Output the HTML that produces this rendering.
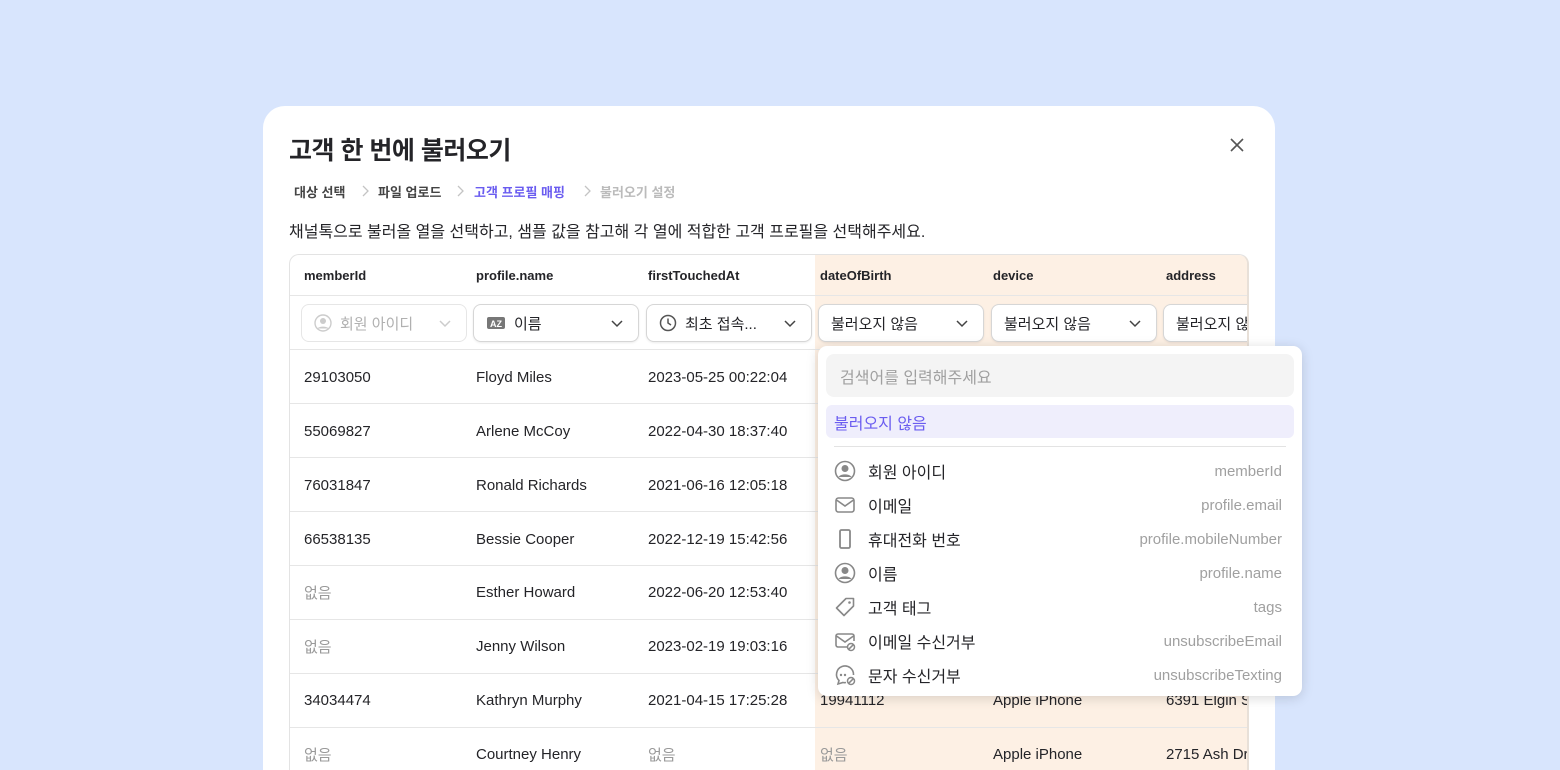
<!DOCTYPE html>
<html><head><meta charset="utf-8"><style>
*{box-sizing:border-box;margin:0;padding:0}
html,body{width:1560px;height:770px;overflow:hidden}
body{background:#d8e5fd;font-family:"Liberation Sans","Noto Sans CJK KR",sans-serif;color:#242428;position:relative}
.modal{position:absolute;left:263px;top:106px;width:1012px;height:664px;background:#fff;border-radius:22px 22px 0 0}
.abs{position:absolute;white-space:nowrap}
.title{left:289px;top:131px;font-size:25px;font-weight:700;letter-spacing:-0.5px}
.bc{top:182px;font-size:13px;font-weight:700}
.tbl{position:absolute;left:289px;top:254px;width:960px;height:516px;border:1px solid #e3e3e3;border-bottom:none;border-right:2px solid #e8e0d8;border-radius:10px 10px 0 0;overflow:hidden;background:#fff}
.orange{position:absolute;left:525px;top:0;width:440px;height:600px;background:#fdf0e4}
.hl{position:absolute;left:0;width:100%;height:1px;background:#e6e6e6}
.th{position:absolute;top:13px;font-size:13px;font-weight:700;white-space:nowrap}
.td{position:absolute;font-size:15px;white-space:nowrap}
.sel{position:absolute;top:49px;width:166px;height:38px;border:1px solid #d6d6d6;border-radius:8px;background:#fff;box-shadow:0 1px 2px rgba(0,0,0,.08);font-size:15px;padding:0 0 0 12px;display:flex;align-items:center;gap:8px;white-space:nowrap;overflow:hidden}
.sel .ch{position:absolute;right:14px;top:11px}
.dd{position:absolute;left:818px;top:346px;width:484px;height:350px;background:#fff;border-radius:9px;box-shadow:0 2px 12px rgba(0,0,0,.15)}
.it{position:absolute;left:16px;right:20px;height:30px;display:flex;align-items:center;font-size:16px}
.it svg{margin-right:12px}
.it .k{margin-left:auto;color:#a0a0a0;font-size:15px}
.gray{color:#9a9a9a}
</style></head><body>
<div class="modal"></div>
<div class="abs title">고객 한 번에 불러오기</div>
<svg class="abs" style="left:1229px;top:137px" width="16" height="16" viewBox="0 0 16 16"><path d="M2 2L14 14M14 2L2 14" stroke="#555" stroke-width="1.6"/></svg>
<div class="abs bc" style="left:294px;color:#444">대상 선택</div>
<svg class="abs" style="left:360px;top:184px" width="10" height="14" viewBox="0 0 10 14"><path d="M3 2l5 5-5 5" fill="none" stroke="#c4c4c4" stroke-width="1.3"/></svg>
<div class="abs bc" style="left:378px;color:#444">파일 업로드</div>
<svg class="abs" style="left:455px;top:184px" width="10" height="14" viewBox="0 0 10 14"><path d="M3 2l5 5-5 5" fill="none" stroke="#c4c4c4" stroke-width="1.3"/></svg>
<div class="abs bc" style="left:474px;color:#6a5cf0">고객 프로필 매핑</div>
<svg class="abs" style="left:582px;top:184px" width="10" height="14" viewBox="0 0 10 14"><path d="M3 2l5 5-5 5" fill="none" stroke="#c4c4c4" stroke-width="1.3"/></svg>
<div class="abs bc" style="left:600px;color:#bbb">불러오기 설정</div>
<div class="abs" style="left:289px;top:218px;font-size:16px">채널톡으로 불러올 열을 선택하고, 샘플 값을 참고해 각 열에 적합한 고객 프로필을 선택해주세요.</div>
<div class="tbl">
<div class="orange"></div>
<div class="hl" style="top:40px"></div><div class="hl" style="top:94px"></div>
<div class="hl" style="top:148px"></div><div class="hl" style="top:202px"></div><div class="hl" style="top:256px"></div><div class="hl" style="top:310px"></div><div class="hl" style="top:364px"></div><div class="hl" style="top:418px"></div><div class="hl" style="top:472px"></div>
<div class="th" style="left:14px">memberId</div><div class="th" style="left:186px">profile.name</div><div class="th" style="left:358px">firstTouchedAt</div><div class="th" style="left:530px">dateOfBirth</div><div class="th" style="left:703px">device</div><div class="th" style="left:876px">address</div>
<div class="sel" style="left:11px;color:#b0b0b0;border-color:#e6e6e6;box-shadow:none"><svg width="18" height="18" viewBox="0 0 18 18"><circle cx="9" cy="9" r="8" fill="none" stroke="#ccc" stroke-width="1.4"/><circle cx="9" cy="7" r="3" fill="#ccc"/><path d="M3.5 14.5c1.5-2.5 9.5-2.5 11 0" fill="#ccc"/></svg>회원 아이디<svg class="ch" width="14" height="14" viewBox="0 0 14 14"><path d="M2 5l5 5 5-5" fill="none" stroke="#ccc" stroke-width="1.5"/></svg></div>
<div class="sel" style="left:183px"><svg width="20" height="14" viewBox="0 0 20 14"><rect x="1" y="1" width="18" height="12" rx="2" fill="#777"/><text x="10" y="11" font-size="9" font-weight="700" fill="#fff" text-anchor="middle" font-family="Liberation Sans">AZ</text></svg>이름<svg class="ch" width="14" height="14" viewBox="0 0 14 14"><path d="M2 5l5 5 5-5" fill="none" stroke="#444" stroke-width="1.5"/></svg></div>
<div class="sel" style="left:356px"><svg width="18" height="18" viewBox="0 0 18 18"><circle cx="9" cy="9" r="7.5" fill="none" stroke="#555" stroke-width="1.5"/><path d="M9 4.5V9l3 2" fill="none" stroke="#555" stroke-width="1.5"/></svg>최초 접속...<svg class="ch" width="14" height="14" viewBox="0 0 14 14"><path d="M2 5l5 5 5-5" fill="none" stroke="#444" stroke-width="1.5"/></svg></div>
<div class="sel" style="left:528px">불러오지 않음<svg class="ch" width="14" height="14" viewBox="0 0 14 14"><path d="M2 5l5 5 5-5" fill="none" stroke="#444" stroke-width="1.5"/></svg></div>
<div class="sel" style="left:701px">불러오지 않음<svg class="ch" width="14" height="14" viewBox="0 0 14 14"><path d="M2 5l5 5 5-5" fill="none" stroke="#444" stroke-width="1.5"/></svg></div>
<div class="sel" style="left:873px">불러오지 않음</div>
<div class="td" style="left:14px;top:114px">29103050</div><div class="td" style="left:186px;top:114px">Floyd Miles</div><div class="td" style="left:358px;top:114px">2023-05-25 00:22:04</div>
<div class="td" style="left:14px;top:168px">55069827</div><div class="td" style="left:186px;top:168px">Arlene McCoy</div><div class="td" style="left:358px;top:168px">2022-04-30 18:37:40</div>
<div class="td" style="left:14px;top:222px">76031847</div><div class="td" style="left:186px;top:222px">Ronald Richards</div><div class="td" style="left:358px;top:222px">2021-06-16 12:05:18</div>
<div class="td" style="left:14px;top:276px">66538135</div><div class="td" style="left:186px;top:276px">Bessie Cooper</div><div class="td" style="left:358px;top:276px">2022-12-19 15:42:56</div>
<div class="td gray" style="left:14px;top:327px">없음</div><div class="td" style="left:186px;top:329px">Esther Howard</div><div class="td" style="left:358px;top:329px">2022-06-20 12:53:40</div>
<div class="td gray" style="left:14px;top:381px">없음</div><div class="td" style="left:186px;top:383px">Jenny Wilson</div><div class="td" style="left:358px;top:383px">2023-02-19 19:03:16</div>
<div class="td" style="left:14px;top:437px">34034474</div><div class="td" style="left:186px;top:437px">Kathryn Murphy</div><div class="td" style="left:358px;top:437px">2021-04-15 17:25:28</div><div class="td" style="left:530px;top:437px">19941112</div><div class="td" style="left:703px;top:437px">Apple iPhone</div><div class="td" style="left:876px;top:437px">6391 Elgin St</div>
<div class="td gray" style="left:14px;top:489px">없음</div><div class="td" style="left:186px;top:491px">Courtney Henry</div><div class="td gray" style="left:358px;top:489px">없음</div><div class="td gray" style="left:530px;top:489px">없음</div><div class="td" style="left:703px;top:491px">Apple iPhone</div><div class="td" style="left:876px;top:491px">2715 Ash Dr</div>
</div>
<div class="dd">
<div class="abs" style="left:8px;top:8px;width:468px;height:43px;background:#f4f4f4;border-radius:8px;color:#a0a0a0;font-size:16px;padding:10px 14px">검색어를 입력해주세요</div>
<div class="abs" style="left:8px;top:59px;width:468px;height:33px;background:#efeefc;border-radius:6px;color:#6a5cf0;font-size:16px;padding:5px 8px">불러오지 않음</div>
<div class="abs" style="left:16px;top:100px;width:452px;height:1px;background:#e3e3e3"></div>
<div class="it" style="top:110px"><svg width="22" height="22" viewBox="0 0 22 22"><circle cx="11" cy="11" r="9.5" fill="none" stroke="#888" stroke-width="1.6"/><circle cx="11" cy="8.5" r="3.5" fill="#888"/><path d="M4.5 17c2-3.5 11-3.5 13 0" fill="#888"/></svg>회원 아이디<span class="k">memberId</span></div>
<div class="it" style="top:144px"><svg width="22" height="22" viewBox="0 0 22 22"><rect x="2" y="4" width="18" height="14" rx="2.5" fill="none" stroke="#888" stroke-width="1.6"/><path d="M2.5 6l8.5 6 8.5-6" fill="none" stroke="#888" stroke-width="1.6"/></svg>이메일<span class="k">profile.email</span></div>
<div class="it" style="top:178px"><svg width="22" height="22" viewBox="0 0 22 22"><rect x="6" y="2" width="10" height="18" rx="1.5" fill="none" stroke="#888" stroke-width="1.8"/></svg>휴대전화 번호<span class="k">profile.mobileNumber</span></div>
<div class="it" style="top:212px"><svg width="22" height="22" viewBox="0 0 22 22"><circle cx="11" cy="11" r="9.5" fill="none" stroke="#888" stroke-width="1.6"/><circle cx="11" cy="8.5" r="3.5" fill="#888"/><path d="M4.5 17c2-3.5 11-3.5 13 0" fill="#888"/></svg>이름<span class="k">profile.name</span></div>
<div class="it" style="top:246px"><svg width="22" height="22" viewBox="0 0 22 22"><path d="M12 2.5h7.5V10L10 19.5 2.5 12z" fill="none" stroke="#888" stroke-width="1.6" stroke-linejoin="round"/><circle cx="15.5" cy="6.5" r="1.3" fill="#888"/></svg>고객 태그<span class="k">tags</span></div>
<div class="it" style="top:280px"><svg width="22" height="22" viewBox="0 0 22 22"><path d="M13 17H4a2 2 0 0 1-2-2V6a2 2 0 0 1 2-2h14a2 2 0 0 1 2 2v5" fill="none" stroke="#888" stroke-width="1.6"/><path d="M2.5 6l8.5 6 8.5-6" fill="none" stroke="#888" stroke-width="1.6"/><circle cx="17" cy="17" r="3.5" fill="none" stroke="#888" stroke-width="1.5"/><path d="M14.8 19.2l4.4-4.4" stroke="#888" stroke-width="1.5"/></svg>이메일 수신거부<span class="k">unsubscribeEmail</span></div>
<div class="it" style="top:314px"><svg width="22" height="22" viewBox="0 0 22 22"><path d="M12 18.5c-1 .2-2 .2-3 0L4 20l1-3.5A8.5 8.5 0 1 1 19.5 11" fill="none" stroke="#888" stroke-width="1.6"/><circle cx="7" cy="11" r="1.2" fill="#888"/><circle cx="11" cy="11" r="1.2" fill="#888"/><circle cx="17" cy="17" r="3.5" fill="none" stroke="#888" stroke-width="1.5"/><path d="M14.8 19.2l4.4-4.4" stroke="#888" stroke-width="1.5"/></svg>문자 수신거부<span class="k">unsubscribeTexting</span></div>
</div>
</body></html>
